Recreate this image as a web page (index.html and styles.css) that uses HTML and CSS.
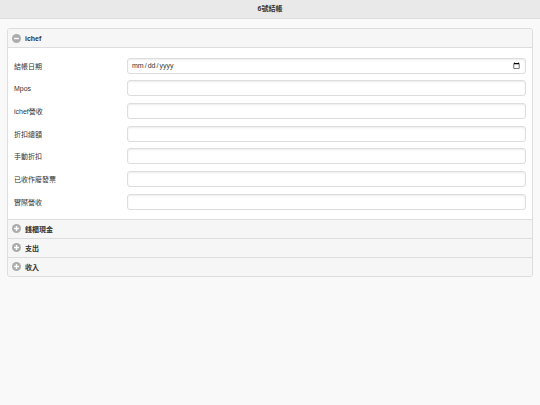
FILE: index.html
```html
<!DOCTYPE html>
<html lang="zh-Hant">
<head>
<meta charset="utf-8">
<title>6號結帳</title>
<link rel="stylesheet" href="styles.css">
</head>
<body>
<header class="bar">6號結帳</header>
<main class="page">
  <div class="set">
    <section class="coll open">
      <div class="coll-head">
        <span class="ico"><svg viewBox="0 0 10 10"><circle cx="5" cy="5" r="5" fill="#acacac"/><rect x="2.3" y="4.2" width="5.4" height="1.6" fill="#fff"/></svg></span>
        <span class="coll-title">ichef</span>
      </div>
      <div class="coll-body">
        <div class="row"><label class="lbl">結帳日期</label><input class="fld" type="date"></div>
        <div class="row"><label class="lbl">Mpos</label><input class="fld" type="text"></div>
        <div class="row"><label class="lbl">ichef營收</label><input class="fld" type="text"></div>
        <div class="row"><label class="lbl">折扣總額</label><input class="fld" type="text"></div>
        <div class="row"><label class="lbl">手動折扣</label><input class="fld" type="text"></div>
        <div class="row"><label class="lbl">已收作廢發票</label><input class="fld" type="text"></div>
        <div class="row"><label class="lbl">實際營收</label><input class="fld" type="text"></div>
      </div>
    </section>
    <section class="coll">
      <div class="coll-head">
        <span class="ico"><svg viewBox="0 0 10 10"><circle cx="5" cy="5" r="5" fill="#acacac"/><rect x="2.3" y="4.2" width="5.4" height="1.6" fill="#fff"/><rect x="4.2" y="2.3" width="1.6" height="5.4" fill="#fff"/></svg></span>
        <span class="coll-title">錢櫃現金</span>
      </div>
    </section>
    <section class="coll">
      <div class="coll-head">
        <span class="ico"><svg viewBox="0 0 10 10"><circle cx="5" cy="5" r="5" fill="#acacac"/><rect x="2.3" y="4.2" width="5.4" height="1.6" fill="#fff"/><rect x="4.2" y="2.3" width="1.6" height="5.4" fill="#fff"/></svg></span>
        <span class="coll-title">支出</span>
      </div>
    </section>
    <section class="coll">
      <div class="coll-head">
        <span class="ico"><svg viewBox="0 0 10 10"><circle cx="5" cy="5" r="5" fill="#acacac"/><rect x="2.3" y="4.2" width="5.4" height="1.6" fill="#fff"/><rect x="4.2" y="2.3" width="1.6" height="5.4" fill="#fff"/></svg></span>
        <span class="coll-title">收入</span>
      </div>
    </section>
  </div>
</main>
</body>
</html>
```

FILE: styles.css
```css
html, body {
  margin: 0;
  padding: 0;
}
body {
  background: #f9f9f9;
  font-family: "Liberation Sans", "Noto Sans CJK TC", sans-serif;
  color: #333;
  font-size: 7px;
}
.bar {
  height: 18px;
  line-height: 18px;
  background: #e9e9e9;
  border-bottom: 1px solid #dddddd;
  text-align: center;
  font-weight: bold;
  font-size: 7px;
  color: #333;
}
.page {
  padding: 9px 7px;
}
.set {
  border: 1px solid #dddddd;
  border-radius: 3px;
  overflow: hidden;
  background: #f6f6f6;
}
.coll + .coll {
  border-top: 1px solid #dddddd;
}
.coll-head {
  height: 18px;
  display: flex;
  align-items: center;
  gap: 4px;
  padding-left: 4px;
  background: #f6f6f6;
  font-weight: bold;
  font-size: 7px;
  color: #333;
}
.ico {
  width: 9px;
  height: 9px;
  display: flex;
}
.ico svg {
  width: 9px;
  height: 9px;
}
.coll-body {
  background: #fff;
  border-top: 1px solid #dddddd;
  padding: 9.5px 6px 9px 6px;
  display: flex;
  flex-direction: column;
  gap: 6.7px;
}
.row {
  display: grid;
  grid-template-columns: 113px 1fr;
  align-items: center;
}
.lbl {
  font-size: 7px;
  color: #333;
}
.fld {
  box-sizing: border-box;
  height: 16px;
  width: 100%;
  margin: 0;
  border: 1px solid #dddddd;
  border-radius: 3px;
  background: #fff;
  box-shadow: inset 0 1px 2px rgba(0,0,0,0.08);
  font-family: "Liberation Sans", sans-serif;
  font-size: 7px;
  color: #333;
  padding: 0 3px;
  outline: none;
}
```
